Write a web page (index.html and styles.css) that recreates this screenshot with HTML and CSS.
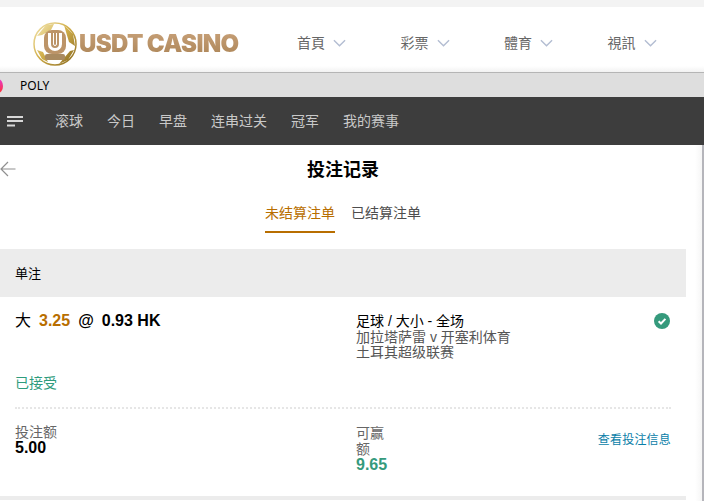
FILE: index.html
```html
<!DOCTYPE html>
<html lang="zh">
<head>
<meta charset="utf-8">
<title>USDT CASINO</title>
<link rel="stylesheet" href="styles.css">
</head>
<body>
<div class="top-strip"></div>
<header class="site-header">
  <div class="logo">
    <svg class="logo-ball" width="44" height="44" viewBox="0 0 44 44">
      <defs>
        <linearGradient id="gold" x1="0" y1="0" x2="1" y2="1">
          <stop offset="0" stop-color="#f3e6b0"/>
          <stop offset=".45" stop-color="#d2b04c"/>
          <stop offset="1" stop-color="#8a6a1f"/>
        </linearGradient>
      </defs>
      <circle cx="22" cy="22" r="21" fill="#fff" stroke="url(#gold)" stroke-width="1.5"/>
      <path d="M13 3 L21 2 L18 8 L9 13 L4 14 Z M31 3 L40 12 L42 24 L36 20 L33 10 Z M4 28 L10 30 L15 40 L9 37 Z M37 29 L41 28 L35 38 L26 42 L31 36 Z" fill="url(#gold)"/>
      <rect x="11" y="8" width="22" height="24" rx="8" fill="#bc9468"/>
      <path d="M16.5 11 V22 a5.5 5.5 0 0 0 11 0 V11" fill="none" stroke="#fff" stroke-width="3"/>
      <path d="M20.5 11 V22 a1.5 1.5 0 0 0 3 0 V11" fill="none" stroke="#fff" stroke-width="1"/>
      <rect x="12" y="32" width="20" height="6" rx="2" fill="#a98a60"/>
    </svg>
    <span class="logo-text">USDT CASINO</span>
  </div>
  <nav class="site-nav">
    <a class="site-link">首頁<svg class="chev" viewBox="0 0 14 8"><path d="M1 1 L7 7 L13 1"/></svg></a>
    <a class="site-link">彩票<svg class="chev" viewBox="0 0 14 8"><path d="M1 1 L7 7 L13 1"/></svg></a>
    <a class="site-link">體育<svg class="chev" viewBox="0 0 14 8"><path d="M1 1 L7 7 L13 1"/></svg></a>
    <a class="site-link">視訊<svg class="chev" viewBox="0 0 14 8"><path d="M1 1 L7 7 L13 1"/></svg></a>
  </nav>
</header>
<div class="title-bar"><span class="favicon"></span><span class="title-name">POLY</span></div>
<nav class="sport-nav">
  <svg class="menu-icon" width="16" height="11" viewBox="0 0 16 11"><path d="M0 0h16v2H0zM0 4h16v2H0zM0 8.500h8v2H0z" fill="#d8d8d8"/></svg>
  <a>滚球</a><a>今日</a><a>早盘</a><a>连串过关</a><a>冠军</a><a>我的赛事</a>
</nav>
<main class="content">
  <div class="page-head">
    <svg class="back" width="16" height="16" viewBox="0 0 16 16"><path d="M15.500 8H1M8 1L1 8l7 7" fill="none" stroke="#8f8f8f" stroke-width="1.2"/></svg>
    <h1>投注记录</h1>
  </div>
  <div class="tabs">
    <a class="tab active">未结算注单</a>
    <a class="tab">已结算注单</a>
  </div>
  <section class="bet">
    <div class="bet-type">单注</div>
    <div class="bet-main">
      <div class="selection"><span class="side">大</span><span class="line">3.25</span><span>@</span><span>0.93 HK</span></div>
      <div class="market">
        <div class="market-name">足球 / 大小 - 全场</div>
        <div>加拉塔萨雷 v 开塞利体育</div>
        <div>土耳其超级联赛</div>
      </div>
      <svg class="ok" width="16" height="16" viewBox="0 0 16 16"><circle cx="8" cy="8" r="8" fill="#359a7c"/><path d="M4.600 8.200l2.400 2.300 4.400-4.600" fill="none" stroke="#fff" stroke-width="2"/></svg>
    </div>
    <div class="status">已接受</div>
    <div class="bet-foot">
      <div class="stake"><div class="label">投注额</div><div class="value">5.00</div></div>
      <div class="win"><div class="label">可赢<br>额</div><div class="value green">9.65</div></div>
      <a class="info">查看投注信息</a>
    </div>
  </section>
  <div class="next-bar"></div>
</main>
<div class="page-edge"></div>
</body>
</html>
```
FILE: styles.css
```css
* { box-sizing: border-box; }
html, body { margin: 0; padding: 0; height: 501px; overflow: hidden; }
body {
  position: relative;
  background: #fff;
  font-family: "Liberation Sans", "Noto Sans CJK SC", sans-serif;
  color: #000;
}
.top-strip { height: 7px; background: #f3f3f3; }
.site-header {
  height: 66px;
  display: flex;
  align-items: center;
  padding: 8px 0 0 33px;
  background: linear-gradient(#fff 59px, #f2f2f2 65px);
  border-bottom: 1px solid #b5b5b5;
}
.logo { flex: none; display: flex; align-items: center; width: 264px; }
.logo-ball { flex: none; margin-right: 2px; }
.logo-text {
  font-family: "Inter", "Liberation Sans", sans-serif;
  font-weight: 900;
  font-size: 24px;
  letter-spacing: -0.65px;
  white-space: nowrap;
  background: linear-gradient(#c9a27a, #ab8456);
  -webkit-background-clip: text;
  background-clip: text;
  color: transparent;
}
.site-nav { flex: none; display: flex; margin-top: -4px; }
.site-link {
  flex: none;
  width: 103.5px;
  display: flex;
  align-items: center;
  font-family: "Noto Sans CJK TC", sans-serif;
  font-size: 14px;
  color: #666;
}
.chev { width: 13px; height: 8px; margin: 3px 0 0 8px; }
.chev path { fill: none; stroke: #b3bdd2; stroke-width: 1.5; }
.title-bar {
  height: 24px;
  background: #dedede;
  display: flex;
  align-items: center;
  font-family: "Noto Sans", sans-serif;
  font-size: 12px;
  padding-left: 20px;
  position: relative;
}
.favicon {
  position: absolute;
  left: -7px;
  top: 6px;
  width: 10px;
  height: 14px;
  border-radius: 50%;
  background: linear-gradient(#e83ad0, #ff3030);
}
.sport-nav {
  height: 48px;
  padding-bottom: 2px;
  background: #3d3d3d;
  display: flex;
  align-items: center;
  gap: 24px;
  padding-left: 7px;
  font-family: "Noto Sans CJK SC", sans-serif;
  font-size: 14px;
  color: #c9c9c9;
}
.menu-icon { margin: 2px 8px 0 0; }
.content { width: 686px; }
.page-head {
  height: 49px;
  display: flex;
  align-items: center;
  justify-content: center;
  position: relative;
}
.back { position: absolute; left: 0; top: 16px; }
h1 {
  margin: -4px 0 0;
  font-family: "Noto Sans CJK SC", sans-serif;
  font-size: 18px;
  font-weight: 700;
}
.tabs {
  height: 39px;
  display: flex;
  justify-content: center;
  gap: 16px;
  font-family: "Noto Sans CJK SC", sans-serif;
  font-size: 14px;
  color: #4d4d4d;
}
.tab {
  width: 70px;
  height: 39px;
  line-height: 37px;
  white-space: nowrap;
}
.tab.active {
  color: #b86e00;
  border-bottom: 2px solid #b86e00;
}
.bet { margin-top: 16px; }
.bet-type {
  height: 48px;
  padding-bottom: 2px;
  background: #ececec;
  padding-left: 15px;
  display: flex;
  align-items: center;
  font-family: "Noto Sans CJK SC", sans-serif;
  font-size: 13px;
}
.bet-main {
  display: grid;
  grid-template-columns: 341px 1fr 16px;
  padding: 16px 16px 0 15px;
  height: 75px;
}
.selection {
  display: flex;
  align-items: center;
  gap: 8px;
  font-size: 16px;
  font-weight: 700;
  line-height: 16px;
  height: 16px;
}
.selection .side { font-weight: 400; }
.selection .line { color: #b86e00; }
.market {
  font-size: 14px;
  line-height: 15.5px;
  color: #555;
  padding-top: 1px;
}
.market-name { color: #000; }
.status {
  margin-left: 15px;
  font-family: "Noto Sans CJK SC", sans-serif;
  font-size: 14px;
  line-height: 20px;
  color: #2f9c7d;
}
.bet-foot {
  margin: 15px 15px 0;
  border-top: 2px dotted #e6e6e6;
  padding-top: 14px;
  display: grid;
  grid-template-columns: 341px 1fr auto;
  height: 89px;
}
.label {
  font-family: "Noto Sans CJK SC", sans-serif;
  font-size: 14px;
  line-height: 16px;
  color: #666;
}
.win { padding-top: 1px; }
.win .label { width: 30px; }
.value { margin-top: 1px; font-size: 16px; font-weight: 700; line-height: 16px; }
.value.green { color: #359a7c; }
.info {
  font-family: "Noto Sans CJK SC", sans-serif;
  font-size: 12px;
  letter-spacing: 0.2px;
  color: #0a7ea8;
  padding-top: 7px;
  line-height: 17px;
}
.next-bar { height: 4px; background: #ececec; }
.page-edge {
  position: absolute;
  right: 0;
  top: 145px;
  bottom: 0;
  width: 18px;
  background: linear-gradient(90deg, #fff 50%, #f6f6f6 88%, #b5b5bb 89%);
}
```
